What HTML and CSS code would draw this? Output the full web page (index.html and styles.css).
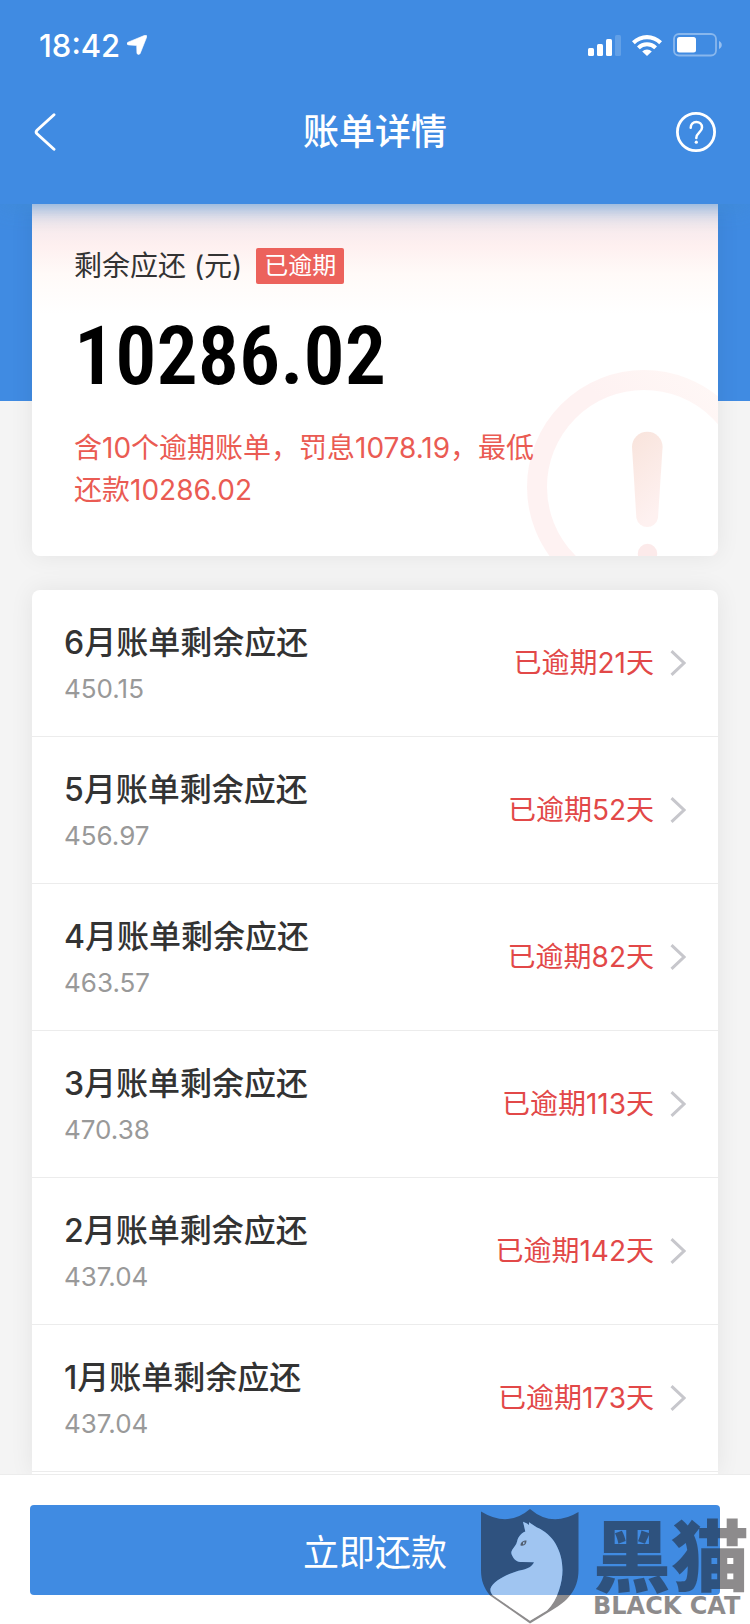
FILE: index.html
```html
<!DOCTYPE html>
<html lang="zh-CN">
<head>
<meta charset="utf-8">
<meta name="viewport" content="width=device-width, initial-scale=1">
<title>账单详情</title>
<link rel="stylesheet" href="styles.css">
</head>
<body>
<div class="screen">
  <header class="header">
    <div class="status">
      <div class="status-time">
        <span>18:42</span>
        <svg width="20" height="20" viewBox="0 0 20 20" aria-hidden="true"><path d="M1 7.200 17.800.3c1.400-.5 2.400.4 1.900 1.800L13.200 18.400c-.8 1.700-3.300 1.400-3.300-.6L9.700 10.500 1.700 9.900C-.3 9.800-.6 8 1 7.200z" fill="#fff" stroke="#fff" stroke-width=".6"/></svg>
      </div>
      <div class="status-icons">
        <svg width="33" height="22" viewBox="0 0 33 22" aria-hidden="true"><g fill="#fff"><rect y="14" width="6" height="8" rx="1.500"/><rect x="9" y="10" width="6" height="12" rx="1.500"/><rect x="18" y="5" width="6" height="17" rx="1.500"/><rect x="27" y="1" width="6" height="21" rx="1.500" opacity=".18"/></g></svg>
        <svg width="30" height="22" viewBox="0 0 30 22" aria-hidden="true"><g fill="#fff"><path d="M0 7.200a21.500 21.500 0 0 1 30 0L27.200 10.200a17.400 17.400 0 0 0-24.400 0z"/><path d="M5 12.400a14.300 14.300 0 0 1 20 0L22.200 15.300a10.200 10.200 0 0 0-14.400 0z"/><path d="M10.200 17.400a7 7 0 0 1 9.600 0L15 22z"/></g></svg>
        <svg width="50" height="24" viewBox="0 0 50 24" aria-hidden="true"><rect x="1" y="1" width="42" height="21.500" rx="5" fill="none" stroke="#fff" stroke-width="1.800" opacity=".38"/><path d="M46 8v8c3.700-1.600 3.700-6.400 0-8z" fill="#fff" opacity=".45"/><rect x="4" y="4" width="19" height="15.500" rx="2.500" fill="#fff"/></svg>
      </div>
    </div>
    <nav class="nav">
      <button class="icon-button" type="button" aria-label="返回">
        <svg width="22" height="40" viewBox="0 0 22 40"><path d="M20 2.800 3 18.200Q1.300 20 3 21.800L20 37.200" fill="none" stroke="#fff" stroke-width="2.900" stroke-linecap="round"/></svg>
      </button>
      <h1 class="title">账单详情</h1>
      <button class="icon-button icon-button-end" type="button" aria-label="帮助">
        <svg width="40" height="40" viewBox="0 0 40 40"><circle cx="20" cy="20" r="18.600" fill="none" stroke="#fff" stroke-width="2.800"/><path d="M14.700 15.800c0-3.600 2.400-5.800 5.600-5.800s5.700 2.200 5.700 5.400c0 2.300-1.300 3.600-2.700 4.900-1.700 1.600-3 3-3 5.700" fill="none" stroke="#fff" stroke-width="2.500" stroke-linecap="round"/><circle cx="20.300" cy="30.200" r="1.600" fill="#fff"/></svg>
      </button>
    </nav>
  </header>

  <main class="content">
    <section class="card summary">
      <svg class="summary-mark" width="191" height="186" viewBox="0 0 191 186" aria-hidden="true">
        <defs>
          <linearGradient id="ring" x1="0" y1="1" x2="1" y2="0"><stop offset=".6" stop-color="#fef2f2"/><stop offset="1" stop-color="#fff9f7"/></linearGradient>
          <linearGradient id="bar" x1="0" y1="0" x2=".3" y2="1"><stop offset=".1" stop-color="#f9e5de"/><stop offset="1" stop-color="#fef1f0"/></linearGradient>
        </defs>
        <circle cx="117" cy="117" r="107" fill="none" stroke="url(#ring)" stroke-width="20"/>
        <path d="M105 77a15.300 15.300 0 0 1 30.600 0L131 148a11 11 0 0 1-21.600 0z" fill="url(#bar)"/>
        <circle cx="120.500" cy="183.500" r="9.700" fill="#fceaea"/>
      </svg>
      <div class="summary-label"><span>剩余应还 (元)</span><span class="badge">已逾期</span></div>
      <div class="summary-amount">10286.02</div>
      <p class="summary-note">含10个逾期账单，罚息1078.19，最低还款10286.02</p>
    </section>

    <section class="card bills">
      <a class="bill" href="#"><span class="bill-info"><span class="bill-name">6月账单剩余应还</span><span class="bill-amount">450.15</span></span><span class="bill-state">已逾期21天</span><svg class="chevron" width="16" height="26" viewBox="0 0 16 26"><path d="M1.500 1.200 14 13 1.500 24.800"/></svg></a>
      <a class="bill" href="#"><span class="bill-info"><span class="bill-name">5月账单剩余应还</span><span class="bill-amount">456.97</span></span><span class="bill-state">已逾期52天</span><svg class="chevron" width="16" height="26" viewBox="0 0 16 26"><path d="M1.500 1.200 14 13 1.500 24.800"/></svg></a>
      <a class="bill" href="#"><span class="bill-info"><span class="bill-name">4月账单剩余应还</span><span class="bill-amount">463.57</span></span><span class="bill-state">已逾期82天</span><svg class="chevron" width="16" height="26" viewBox="0 0 16 26"><path d="M1.500 1.200 14 13 1.500 24.800"/></svg></a>
      <a class="bill" href="#"><span class="bill-info"><span class="bill-name">3月账单剩余应还</span><span class="bill-amount">470.38</span></span><span class="bill-state">已逾期113天</span><svg class="chevron" width="16" height="26" viewBox="0 0 16 26"><path d="M1.500 1.200 14 13 1.500 24.800"/></svg></a>
      <a class="bill" href="#"><span class="bill-info"><span class="bill-name">2月账单剩余应还</span><span class="bill-amount">437.04</span></span><span class="bill-state">已逾期142天</span><svg class="chevron" width="16" height="26" viewBox="0 0 16 26"><path d="M1.500 1.200 14 13 1.500 24.800"/></svg></a>
      <a class="bill" href="#"><span class="bill-info"><span class="bill-name">1月账单剩余应还</span><span class="bill-amount">437.04</span></span><span class="bill-state">已逾期173天</span><svg class="chevron" width="16" height="26" viewBox="0 0 16 26"><path d="M1.500 1.200 14 13 1.500 24.800"/></svg></a>
    </section>
  </main>

  <footer class="footer">
    <button class="pay" type="button">立即还款</button>
    <div class="watermark">
      <svg width="98" height="116" viewBox="0 0 98 116" aria-hidden="true">
        <path fill="#1e1a1c" fill-rule="evenodd" opacity=".5" d="M0 3.500Q27 20 49 1Q71 20 97.500 4V62C97.500 83 85 94 72 101.500L49 115.500 9 87.500C3 80 0 73 0 62zM42 13.700 44.300 23.500C39.500 25.500 37 29.500 36.200 33 35.400 37 33 39 31.400 41.500 29.800 44 30 45.500 31.400 48 33.500 52 36 54 41 54L53 54.300C51 58.500 47 60.700 41 62 27 65 12 73 9.500 80.500 9 83 10 85 11.500 87L49 112.800 66 102.500C77 92 81.500 74 81.500 62 81.500 43 72 26 56 19.500L48 14.300V17L46 15.500z"/>
        <path fill="#fff" opacity=".5" d="M42 13.700 44.300 23.500C39.500 25.500 37 29.500 36.200 33 35.400 37 33 39 31.400 41.500 29.800 44 30 45.500 31.400 48 33.500 52 36 54 41 54L53 54.300C51 58.500 47 60.700 41 62 27 65 12 73 9.500 80.500 9 83 10 85 11.500 87L49 112.800 66 102.500C77 92 81.500 74 81.500 62 81.500 43 72 26 56 19.500L48 14.300V17L46 15.500z"/>
        <path fill="#1e1a1c" opacity=".6" fill-rule="evenodd" d="M39.500 37.500C39.500 34 42 32.500 45.500 32.500 45.500 36 43.500 38.500 39.500 37.500zM42 34.500V36.500L43.500 35.800V33.600z"/>
      </svg>
      <div class="watermark-text"><span class="watermark-name">黑猫</span><span class="watermark-latin">BLACK CAT</span></div>
    </div>
  </footer>
</div>
</body>
</html>
```
FILE: styles.css
```css
:root {
  --blue: #408be2;
  --font: Inter, "Noto Sans CJK SC", sans-serif;
}

* {
  box-sizing: border-box;
}

body {
  margin: 0;
  background: #f4f4f4;
  font-family: var(--font);
  color: #333;
}

svg {
  display: block;
  flex: none;
}

.screen {
  display: flex;
  flex-direction: column;
  min-height: 100vh;
}

.header {
  position: sticky;
  top: 0;
  z-index: 2;
  padding-bottom: 30px;
  background: var(--blue);
  box-shadow: 0 0 24px rgba(64, 139, 210, 0.9);
  color: #fff;
}

.status {
  display: flex;
  justify-content: space-between;
  align-items: center;
  height: 90px;
  padding: 0 27px 0 39px;
}

.status-time {
  display: flex;
  align-items: center;
  gap: 7px;
  font-size: 31px;
  font-weight: 500;
}

.status-icons {
  display: flex;
  align-items: center;
  gap: 11px;
}

.nav {
  display: grid;
  grid-template-columns: 1fr auto 1fr;
  align-items: center;
  height: 84px;
  padding: 0 34px;
}

.icon-button {
  justify-self: start;
  padding: 0;
  border: 0;
  background: none;
}

.icon-button-end {
  justify-self: end;
}

.title {
  margin: 0;
  font-size: 36px;
  line-height: 52px;
  font-weight: 500;
}

.content {
  display: flex;
  flex: 1;
  flex-direction: column;
  gap: 34px;
  padding: 0 32px;
  background: linear-gradient(var(--blue) 197px, #f4f4f4 197px);
}

.card {
  border-radius: 8px;
  background: #fff;
  box-shadow: 0 0 24px rgba(0, 0, 0, 0.07);
}

.summary {
  position: relative;
  overflow: hidden;
  padding: 44px 42px 45px;
  border-radius: 0 0 8px 8px;
  background: linear-gradient(#f0e6ea, #fef0f0 42px, #fffaf8 70px, #fff 110px);
}

.summary-mark {
  position: absolute;
  right: 0;
  bottom: 0;
}

.summary-label {
  display: flex;
  align-items: center;
  gap: 14px;
  font-size: 28px;
  line-height: 36px;
}

.badge {
  padding: 0 8px;
  border-radius: 2px;
  background: #ec625c;
  color: #fff;
  font-size: 24px;
}

.summary-amount {
  margin: 28px 0 27px;
  color: #000;
  font-family: "Liberation Sans Narrow", "Roboto Condensed", Roboto, sans-serif;
  font-size: 82px;
  line-height: 88px;
  font-weight: 600;
}

.summary-note {
  position: relative;
  max-width: 476px;
  margin: 0;
  color: #ea5b53;
  font-size: 28px;
  line-height: 42px;
}

.bills {
  flex: 1;
  padding-bottom: 2px;
  border-radius: 8px 8px 0 0;
}

.bill {
  display: flex;
  align-items: center;
  gap: 16px;
  height: 147px;
  padding: 0 32px;
  border-bottom: 1px solid #ececec;
  color: inherit;
  text-decoration: none;
}

.bill-info {
  display: flex;
  flex: 1;
  flex-direction: column;
  gap: 4px;
}

.bill-name {
  font-size: 32px;
  line-height: 48px;
  font-weight: 500;
}

.bill-amount {
  color: #999;
  font-size: 26px;
  line-height: 36px;
}

.bill-state {
  color: #e24848;
  font-size: 28px;
  line-height: 36px;
}

.chevron {
  fill: none;
  stroke: #c7c7cc;
  stroke-width: 3;
}

.footer {
  position: sticky;
  bottom: 0;
  z-index: 2;
  padding: 30px 30px 29px;
  border-top: 1px solid #ececec;
  background: #fff;
}

.pay {
  display: block;
  width: 100%;
  height: 90px;
  border: 0;
  border-radius: 4px;
  background: var(--blue);
  color: #fff;
  font-family: var(--font);
  font-size: 36px;
}

.watermark {
  position: absolute;
  right: 1px;
  bottom: 0;
  display: flex;
  align-items: center;
  gap: 14px;
  pointer-events: none;
}

.watermark-text {
  display: flex;
  flex-direction: column;
  gap: 4px;
  color: #1e1a1c;
  opacity: 0.5;
}

.watermark-name {
  font-family: "Noto Sans CJK SC", sans-serif;
  font-size: 78px;
  line-height: 76px;
  font-weight: 900;
}

.watermark-latin {
  font-family: "DejaVu Sans", sans-serif;
  font-size: 24px;
  line-height: 24px;
  font-weight: 700;
}
```
